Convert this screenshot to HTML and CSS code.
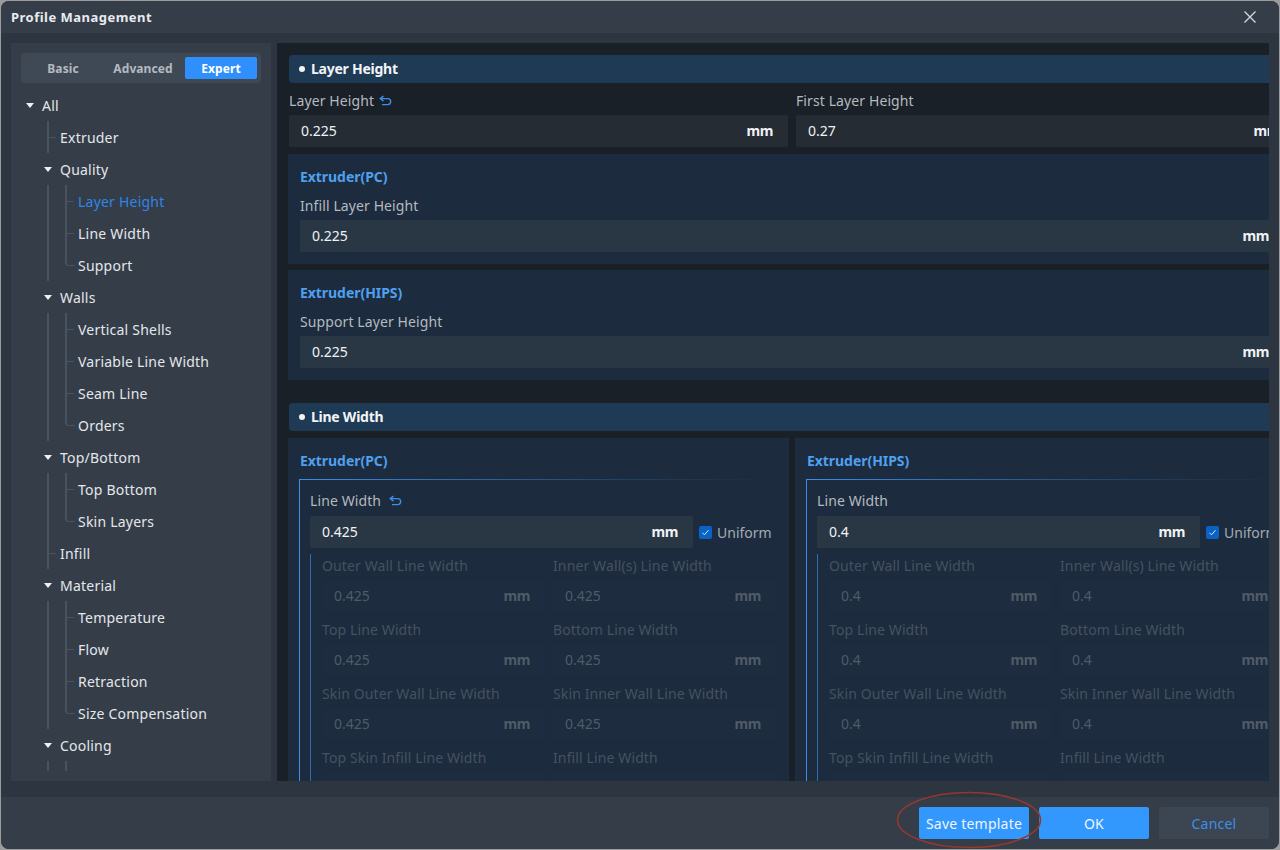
FILE: index.html
```html
<!DOCTYPE html>
<html lang="en">
<head>
<meta charset="utf-8">
<title>Profile Management</title>
<link rel="stylesheet" href="styles.css">
</head>
<body>
<div class="window">
  <header class="titlebar">
    <span class="title">Profile Management</span>
    <svg class="close" width="14" height="14" viewBox="0 0 14 14"><path d="M1.5 1.5l11 11M12.5 1.5l-11 11" stroke="#d5dae0" stroke-width="1.3" fill="none"/></svg>
  </header>
  <div class="body">
    <aside class="sidebar">
      <div class="tabs">
        <span class="tab">Basic</span>
        <span class="tab">Advanced</span>
        <span class="tab tab-on">Expert</span>
      </div>
      <nav class="tree">
        <div class="row l0"><i class="caret"></i>All</div>
        <div class="row l1 leaf">Extruder</div>
        <div class="row l1"><i class="caret"></i>Quality</div>
        <div class="kids">
          <div class="row l2 active">Layer Height</div>
          <div class="row l2">Line Width</div>
          <div class="row l2">Support</div>
        </div>
        <div class="row l1"><i class="caret"></i>Walls</div>
        <div class="kids">
          <div class="row l2">Vertical Shells</div>
          <div class="row l2">Variable Line Width</div>
          <div class="row l2">Seam Line</div>
          <div class="row l2">Orders</div>
        </div>
        <div class="row l1"><i class="caret"></i>Top/Bottom</div>
        <div class="kids">
          <div class="row l2">Top Bottom</div>
          <div class="row l2">Skin Layers</div>
        </div>
        <div class="row l1 leaf">Infill</div>
        <div class="row l1"><i class="caret"></i>Material</div>
        <div class="kids">
          <div class="row l2">Temperature</div>
          <div class="row l2">Flow</div>
          <div class="row l2">Retraction</div>
          <div class="row l2">Size Compensation</div>
        </div>
        <div class="row l1"><i class="caret"></i>Cooling</div>
        <div class="kids">
          <div class="row l2"></div>
        </div>
      </nav>
    </aside>
    <main class="main">
      <div class="content">
        <h2 class="section">Layer Height</h2>
        <div class="two">
          <div class="field">
            <label class="label">Layer Height<svg class="undo" width="13" height="11" viewBox="0 0 13 11"><path d="M4.5 1L1.2 3.6l3.3 2.6M1.5 3.6h7.2a3 3 0 0 1 0 6H3" stroke="#3b8fe8" stroke-width="1.4" fill="none"/></svg></label>
            <div class="input"><span>0.225</span><b>mm</b></div>
          </div>
          <div class="field">
            <label class="label">First Layer Height</label>
            <div class="input"><span>0.27</span><b>mm</b></div>
          </div>
        </div>
        <section class="panel first">
          <h3 class="ext">Extruder(PC)</h3>
          <label class="label lab-p">Infill Layer Height</label>
          <div class="input inp-p"><span>0.225</span><b>mm</b></div>
        </section>
        <section class="panel">
          <h3 class="ext">Extruder(HIPS)</h3>
          <label class="label lab-p">Support Layer Height</label>
          <div class="input inp-p"><span>0.225</span><b>mm</b></div>
        </section>
        <h2 class="section second">Line Width</h2>
        <div class="cols">
          <section class="panel col">
            <h3 class="ext">Extruder(PC)</h3>
            <div class="box">
              <label class="label lab-b">Line Width<svg class="undo undo-b" width="13" height="11" viewBox="0 0 13 11"><path d="M4.5 1L1.2 3.6l3.3 2.6M1.5 3.6h7.2a3 3 0 0 1 0 6H3" stroke="#3b8fe8" stroke-width="1.4" fill="none"/></svg></label>
              <div class="line">
                <div class="input inp-p grow"><span>0.425</span><b>mm</b></div>
                <div class="uniform"><span class="check"><svg width="9" height="9" viewBox="0 0 9 9"><path d="M1.5 4.8l2 2 4-4.6" stroke="#dbe8f7" stroke-width="1" fill="none"/></svg></span>Uniform</div>
              </div>
              <div class="sub">
                <div class="cell"><label class="dim">Outer Wall Line Width</label><div class="dinput"><span>0.425</span><b>mm</b></div></div>
                <div class="cell"><label class="dim">Inner Wall(s) Line Width</label><div class="dinput"><span>0.425</span><b>mm</b></div></div>
                <div class="cell"><label class="dim">Top Line Width</label><div class="dinput"><span>0.425</span><b>mm</b></div></div>
                <div class="cell"><label class="dim">Bottom Line Width</label><div class="dinput"><span>0.425</span><b>mm</b></div></div>
                <div class="cell"><label class="dim">Skin Outer Wall Line Width</label><div class="dinput"><span>0.425</span><b>mm</b></div></div>
                <div class="cell"><label class="dim">Skin Inner Wall Line Width</label><div class="dinput"><span>0.425</span><b>mm</b></div></div>
                <div class="cell"><label class="dim">Top Skin Infill Line Width</label><div class="dinput"><span>0.425</span><b>mm</b></div></div>
                <div class="cell"><label class="dim">Infill Line Width</label><div class="dinput"><span>0.425</span><b>mm</b></div></div>
              </div>
            </div>
          </section>
          <section class="panel col">
            <h3 class="ext">Extruder(HIPS)</h3>
            <div class="box">
              <label class="label lab-b">Line Width</label>
              <div class="line">
                <div class="input inp-p grow"><span>0.4</span><b>mm</b></div>
                <div class="uniform"><span class="check"><svg width="9" height="9" viewBox="0 0 9 9"><path d="M1.5 4.8l2 2 4-4.6" stroke="#dbe8f7" stroke-width="1" fill="none"/></svg></span>Uniform</div>
              </div>
              <div class="sub">
                <div class="cell"><label class="dim">Outer Wall Line Width</label><div class="dinput"><span>0.4</span><b>mm</b></div></div>
                <div class="cell"><label class="dim">Inner Wall(s) Line Width</label><div class="dinput"><span>0.4</span><b>mm</b></div></div>
                <div class="cell"><label class="dim">Top Line Width</label><div class="dinput"><span>0.4</span><b>mm</b></div></div>
                <div class="cell"><label class="dim">Bottom Line Width</label><div class="dinput"><span>0.4</span><b>mm</b></div></div>
                <div class="cell"><label class="dim">Skin Outer Wall Line Width</label><div class="dinput"><span>0.4</span><b>mm</b></div></div>
                <div class="cell"><label class="dim">Skin Inner Wall Line Width</label><div class="dinput"><span>0.4</span><b>mm</b></div></div>
                <div class="cell"><label class="dim">Top Skin Infill Line Width</label><div class="dinput"><span>0.4</span><b>mm</b></div></div>
                <div class="cell"><label class="dim">Infill Line Width</label><div class="dinput"><span>0.4</span><b>mm</b></div></div>
              </div>
            </div>
          </section>
        </div>
      </div>
    </main>
  </div>
  <footer class="footer">
    <button class="btn primary">Save template</button>
    <button class="btn primary">OK</button>
    <button class="btn cancel">Cancel</button>
    <svg class="ring" width="146" height="58" viewBox="0 0 146 58"><ellipse cx="73" cy="29" rx="71.5" ry="27.5" fill="none" stroke="#93382f" stroke-width="1.6"/></svg>
  </footer>
</div>
</body>
</html>
```
FILE: styles.css
```css
* { box-sizing: border-box; }
html, body { margin: 0; height: 100%; }
body {
  background: #9c9c9c;
  padding: 1px 1px 1px 1px;
  font-family: "Noto Sans", sans-serif;
  font-size: 14px;
  overflow: hidden;
}
.window {
  height: 848px;
  display: flex;
  flex-direction: column;
  background: #2d3540;
  border-radius: 8px;
  overflow: hidden;
}
.titlebar {
  height: 32px;
  flex: none;
  background: #353d49;
  display: flex;
  align-items: center;
  justify-content: space-between;
  padding: 0 22px 0 10px;
}
.title { color: #e8ebee; font-weight: 700; font-size: 13px; letter-spacing: 0.48px; }
.close { display: block; }
.body {
  flex: none;
  height: 764px;
  padding: 10px 10px 16px 10px;
  display: flex;
  gap: 6px;
}
.sidebar {
  width: 260px;
  flex: none;
  background: #353d49;
  padding: 10px;
  display: flex;
  flex-direction: column;
  gap: 6px;
}
.tabs {
  flex: none;
  height: 30px;
  background: #3f4955;
  border-radius: 4px;
  padding: 4px;
  display: grid;
  grid-template-columns: 76px 76px 72px;
  gap: 4px;
}
.tab {
  font-size: 12px;
  font-weight: 700;
  color: #b4b9bf;
  text-align: center;
  line-height: 24px;
  height: 22px;
  border-radius: 2px;
  letter-spacing: 0.08px;
}
.tab-on { background: #2f8ffd; color: #fff; }
.tree { flex: 1; min-height: 0; overflow: hidden; }
.row {
  height: 32px;
  line-height: 34px;
  color: #e4e7ea;
  position: relative;
  white-space: nowrap;
  letter-spacing: 0.22px;
}
.l0 { padding-left: 21px; }
.l1 { padding-left: 39px; }
.l2 { padding-left: 57px; }
.active { color: #2f86e6; }
.caret {
  position: absolute;
  top: 14px;
  width: 0;
  height: 0;
  border-left: 4px solid transparent;
  border-right: 4px solid transparent;
  border-top: 5px solid #eef0f2;
}
.l0 .caret { left: 5px; }
.l1 .caret { left: 23px; }
.leaf::before, .l2::before {
  content: "";
  position: absolute;
  top: 0;
  bottom: 0;
  width: 2px;
  background: #49525f;
}
.leaf::before { left: 26px; }
.l2::before { left: 44px; }
.leaf::after, .l2::after {
  content: "";
  position: absolute;
  top: 16px;
  height: 1px;
  width: 7px;
  background: #49525f;
}
.leaf::after { left: 28px; }
.l2::after { left: 46px; }
.kids { position: relative; border-left: 2px solid #49525f; margin-left: 26px; }
.kids .l2 { margin-left: -28px; padding-left: 57px; }
.kids .l2:last-child::before {
  bottom: 15px;
  width: 8px;
  background: none;
  border-left: 2px solid #49525f;
  border-bottom: 1px solid #49525f;
  border-bottom-left-radius: 4px;
}
.kids .l2:last-child::after { display: none; }
.kids .l2:empty::after { display: none; }
.main {
  flex: 1;
  min-width: 0;
  background: #1a2028;
  overflow: hidden;
  padding: 12px 0 0 12px;
}
.content { width: 1006px; }
.section {
  margin: 0;
  height: 28px;
  line-height: 28px;
  font-size: 14px;
  font-weight: 700;
  letter-spacing: -0.25px;
  color: #f2f4f6;
  background: #1f3a55;
  border-radius: 4px;
  padding-left: 22px;
  position: relative;
}
.section::before {
  content: "";
  position: absolute;
  left: 10px;
  top: 11px;
  width: 6px;
  height: 6px;
  border-radius: 50%;
  background: #f2f4f6;
}
.section.second { margin-top: 23px; }
.two { display: grid; grid-template-columns: 499px 499px; gap: 8px; }
.label {
  display: flex;
  align-items: center;
  gap: 5px;
  color: #b5babf;
  height: 32px;
  padding-top: 2px;
  white-space: pre;
  letter-spacing: 0.1px;
}
.undo { display: block; }
.undo-b { margin-left: 3px; }
.input {
  height: 32px;
  background: #252c34;
  border-radius: 2px;
  display: flex;
  align-items: center;
  justify-content: space-between;
  padding: 0 15px 1px 12px;
  color: #f0f2f4;
}
.input b { font-weight: 700; font-size: 14px; letter-spacing: -0.4px; }
.panel {
  background: #1c2b3e;
  margin: 6px -1px 0;
  padding: 12px 12px 12px 12px;
}
.panel.first { margin-top: 7px; }
.ext {
  margin: 0;
  font-size: 14px;
  font-weight: 700;
  line-height: 22px;
  letter-spacing: -0.05px;
  color: #4fa0ef;
}
.lab-p { height: 32px; }
.inp-p { background: #293745; }
.cols {
  display: grid;
  grid-template-columns: 501px 501px;
  gap: 6px;
  margin: 7px -1px 0;
}
.col { margin: 0; padding: 12px 13px 0 12px; }
.box {
  margin: 7px 0 0 -1px;
  padding: 5px 0 0 10px;
  border-left: 1px solid #3d8ee6;
  background: linear-gradient(90deg, #3d8ee6, #21405f 70%, #1c2b3e) top left / 100% 1px no-repeat;
}
.lab-b { height: 32px; padding-top: 0; }
.line { display: flex; gap: 6px; align-items: center; }
.grow { flex: 1; }
.uniform {
  width: 77px;
  flex: none;
  display: flex;
  align-items: center;
  gap: 5px;
  color: #a4abb3;
  white-space: nowrap;
}
.check {
  width: 13px;
  height: 13px;
  flex: none;
  background: #0a63c4;
  border-radius: 2px;
  display: flex;
  align-items: center;
  justify-content: center;
}
.check svg { display: block; }
.sub {
  margin-top: 6px;
  border-left: 1px solid #2f6cae;
  padding-left: 11px;
  display: grid;
  grid-template-columns: 223px 223px;
  gap: 6px 8px;
}
.dim {
  display: block;
  height: 26px;
  line-height: 24px;
  color: #46525f;
  white-space: nowrap;
  letter-spacing: 0.12px;
}
.dinput {
  height: 32px;
  background: #1d2c3f;
  border-radius: 2px;
  display: flex;
  align-items: center;
  justify-content: space-between;
  padding: 0 15px 1px 12px;
  color: #505b68;
}
.dinput b { font-size: 14px; font-weight: 700; letter-spacing: -0.4px; }
.footer {
  flex: none;
  height: 52px;
  background: #353d49;
  display: flex;
  justify-content: flex-end;
  align-items: center;
  gap: 10px;
  padding: 0 10px 0 0;
  position: relative;
}
.btn {
  width: 110px;
  height: 32px;
  border: 0;
  border-radius: 2px;
  font-family: inherit;
  font-size: 14px;
  letter-spacing: 0.22px;
  padding: 0;
}
.primary { background: #3398fe; color: #eef5fd; }
.cancel { background: #3c4653; color: #3d8fe6; }
.ring { position: absolute; left: 895px; top: -6px; }
```
